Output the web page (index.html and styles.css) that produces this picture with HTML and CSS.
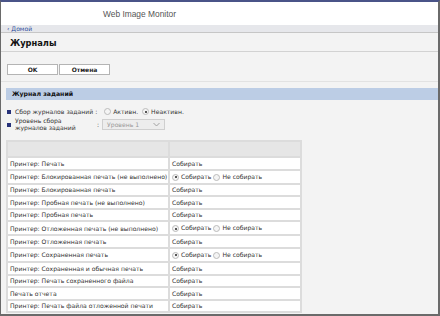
FILE: index.html
```html
<!DOCTYPE html>
<html lang="ru">
<head>
<meta charset="utf-8">
<title>Web Image Monitor</title>
<link rel="stylesheet" href="styles.css">
</head>
<body>
<div class="frame">
  <header class="top"><span class="brand">Web Image Monitor</span></header>
  <nav class="crumb"><a class="home" href="#">‹ Домой</a></nav>
  <h1 class="title">Журналы</h1>
  <div class="actions">
    <button class="btn">OK</button><button class="btn">Отмена</button>
  </div>
  <section class="panel">
    <h2 class="panel-head">Журнал заданий</h2>
    <div class="opts">
      <div class="opt">
        <span class="bullet"></span>
        <span class="label">Сбор журналов заданий :</span>
        <span class="radio"></span><span class="rtext">Активн.</span>
        <span class="radio on"></span><span class="rtext">Неактивн.</span>
      </div>
      <div class="opt">
        <span class="bullet"></span>
        <span class="label two">Уровень сбора<br>журналов заданий</span>
        <span class="colon">:</span>
        <span class="select">Уровень 1<svg class="chev" width="7" height="5" viewBox="0 0 7 5"><path d="M0.5 1 L3.5 4 L6.5 1" fill="none" stroke="#9a9a9a" stroke-width="0.9"/></svg></span>
      </div>
    </div>
    <table class="grid">
      <tr class="head"><td></td><td></td></tr>
      <tr><td>Принтер: Печать</td><td>Собирать</td></tr>
      <tr class="tall"><td>Принтер: Блокированная печать (не выполнено)</td><td><span class="radio on"></span><span class="rtext">Собирать</span> <span class="radio"></span><span class="rtext">Не собирать</span></td></tr>
      <tr><td>Принтер: Блокированная печать</td><td>Собирать</td></tr>
      <tr><td>Принтер: Пробная печать (не выполнено)</td><td>Собирать</td></tr>
      <tr><td>Принтер: Пробная печать</td><td>Собирать</td></tr>
      <tr class="tall"><td>Принтер: Отложенная печать (не выполнено)</td><td><span class="radio on"></span><span class="rtext">Собирать</span> <span class="radio"></span><span class="rtext">Не собирать</span></td></tr>
      <tr><td>Принтер: Отложенная печать</td><td>Собирать</td></tr>
      <tr class="tall"><td>Принтер: Сохраненная печать</td><td><span class="radio on"></span><span class="rtext">Собирать</span> <span class="radio"></span><span class="rtext">Не собирать</span></td></tr>
      <tr><td>Принтер: Сохраненная и обычная печать</td><td>Собирать</td></tr>
      <tr><td>Принтер: Печать сохраненного файла</td><td>Собирать</td></tr>
      <tr><td>Печать отчета</td><td>Собирать</td></tr>
      <tr><td>Принтер: Печать файла отложенной печати</td><td>Собирать</td></tr>
    </table>
  </section>
</div>
</body>
</html>
```
FILE: styles.css
```css
html, body {
  margin: 0;
  padding: 0;
}
body {
  width: 440px;
  height: 316px;
  overflow: hidden;
  font-family: "DejaVu Sans", Verdana, sans-serif;
  color: #333;
}
.frame {
  box-sizing: border-box;
  width: 440px;
  height: 316px;
  background: #f3f3f3;
  border-top: 2px solid #4a5488;
  border-left: 1px solid #6a6a6a;
  border-right: 2px solid #6a6a6a;
  border-bottom: 2px solid #6a6a6a;
  overflow: hidden;
}
.top {
  height: 23px;
  background: #fff;
  display: flex;
  align-items: center;
  padding-left: 102px;
}
.brand {
  font-family: "Liberation Sans", Arial, sans-serif;
  font-size: 8.4px;
  color: #555;
}
.crumb {
  height: 7px;
  background: #e6e7eb;
  border-bottom: 1px solid #c6c6c6;
  display: flex;
  align-items: center;
  padding-left: 6px;
}
.home {
  font-size: 6.1px;
  color: #2c4d9c;
  text-decoration: none;
}
.title {
  margin: 0;
  height: 19px;
  box-sizing: border-box;
  padding-left: 9px;
  padding-top: 5px;
  font-size: 8.3px;
  font-weight: bold;
  color: #111;
  border-bottom: 1px solid #d2d2d2;
}
.actions {
  display: flex;
  padding: 12px 0 0 6px;
  height: 11px;
}
.btn {
  width: 51px;
  height: 11px;
  margin: 0;
  padding: 0;
  background: #fff;
  border: 1px solid #b4b4b4;
  font-family: "DejaVu Sans", Verdana, sans-serif;
  font-size: 6px;
  font-weight: bold;
  color: #222;
  line-height: 9px;
}
.btn + .btn {
  margin-left: 1px;
}
.panel {
  margin-top: 6px;
  border-top: 1px solid #e2e2e2;
  padding-top: 6px;
}
.panel-head {
  margin: 0 0 0 5px;
  height: 12px;
  background: #bccde5;
  font-size: 6.2px;
  font-weight: bold;
  color: #111;
  padding-left: 6px;
  line-height: 12px;
}
.opts {
  padding: 8px 0 0 6px;
}
.opt {
  display: flex;
  align-items: center;
  font-size: 6.1px;
  color: #333;
  white-space: nowrap;
}
.opt + .opt {
  margin-top: 3px;
}
.bullet {
  flex-shrink: 0;
  width: 4px;
  height: 4px;
  background: #27327a;
  margin-right: 4px;
}
.opt .label {
  margin-right: 7px;
}
.label.two {
  width: 82px;
  margin-right: 0;
  line-height: 6.5px;
}
.colon {
  margin-right: 3px;
}
.radio {
  flex-shrink: 0;
  display: inline-block;
  width: 5px;
  height: 5px;
  border: 1px solid #bbb;
  border-radius: 50%;
  background: #f4f4f4;
  vertical-align: middle;
  position: relative;
  margin-right: 2px;
}
.radio.on::after {
  content: "";
  position: absolute;
  left: 1.5px;
  top: 1.5px;
  width: 2px;
  height: 2px;
  border-radius: 50%;
  background: #222;
}
.rtext {
  margin-right: 4px;
}
.grid .rtext {
  margin-right: 0;
}
.select {
  box-sizing: border-box;
  width: 63px;
  height: 11px;
  border: 1px solid #cfcfcf;
  background: #ededed;
  color: #999;
  display: flex;
  align-items: center;
  justify-content: space-between;
  padding: 0 4px 0 4px;
}
.grid {
  margin: 9px 0 0 5px;
  width: 296px;
  border-collapse: collapse;
  background: #fff;
  font-size: 6.1px;
  color: #333;
}
.grid td {
  border: 2px solid #dcdcdc;
  height: 10.5px;
  padding: 0 0 0 2px;
  white-space: nowrap;
}
.grid td:first-child {
  width: 158px;
}
.grid .head td {
  background: #e6e6e6;
  height: 14px;
}
.grid .tall td {
  height: 12.2px;
}
```
